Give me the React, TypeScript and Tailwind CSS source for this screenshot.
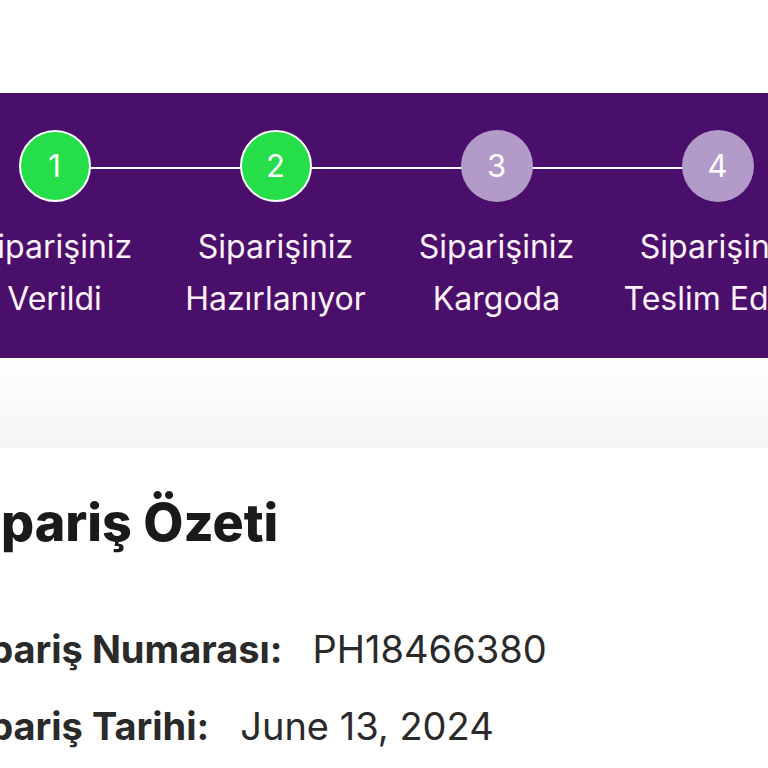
import React from "react";

const steps = [
  { n: 1, l1: "Siparişiniz", l2: "Verildi", done: true },
  { n: 2, l1: "Siparişiniz", l2: "Hazırlanıyor", done: true },
  { n: 3, l1: "Siparişiniz", l2: "Kargoda", done: false },
  { n: 4, l1: "Siparişiniz", l2: "Teslim Edildi", done: false },
];

export default function App() {
  return (
    <div
      className="w-[768px] h-[768px] overflow-hidden bg-white"
      style={{ fontFamily: "Inter, 'Noto Sans', sans-serif" }}
    >
      <div className="h-[93px]" />
      <div className="h-[265px] bg-[#4a0f6a] relative overflow-hidden">
        <div className="absolute left-[-56px] top-[37px] flex">
          {steps.map((s, i) => (
            <div key={s.n} className="w-[221px] flex flex-col items-center relative">
              {i < steps.length - 1 && (
                <div className="absolute top-[37px] left-[110px] w-[221px] h-[2px] bg-white" />
              )}
              <div
                className={
                  s.done
                    ? "relative z-10 w-[72px] h-[72px] rounded-full bg-[#26de49] border-2 border-white flex items-center justify-center text-white text-[31px]"
                    : "relative z-10 w-[72px] h-[72px] rounded-full bg-[#b39bc9] flex items-center justify-center text-white text-[31px]"
                }
              >
                {s.n}
              </div>
              <div className="mt-[19px] text-center text-[#fdf2fb] text-[32px] leading-[52px] whitespace-nowrap">
                <div>{s.l1}</div>
                <div>{s.l2}</div>
              </div>
            </div>
          ))}
        </div>
      </div>
      <div className="h-[90px] bg-gradient-to-b from-white to-[#f5f5f5]" />
      <div className="pt-[45px] text-[#1a1a1a]">
        <h1 className="ml-[-48px] text-[52px] font-extrabold leading-[60px]">Sipariş Özeti</h1>
        <div className="ml-[-46px] mt-[73px] flex items-baseline text-[38px] leading-[46px] text-[#2a2a2a]">
          <span className="font-bold">Sipariş Numarası:</span>
          <span className="ml-[30px]">PH18466380</span>
        </div>
        <div className="ml-[-46px] mt-[31px] flex items-baseline text-[38px] leading-[46px] text-[#2a2a2a]">
          <span className="font-bold">Sipariş Tarihi:</span>
          <span className="ml-[31px]">June 13, 2024</span>
        </div>
      </div>
    </div>
  );
}
